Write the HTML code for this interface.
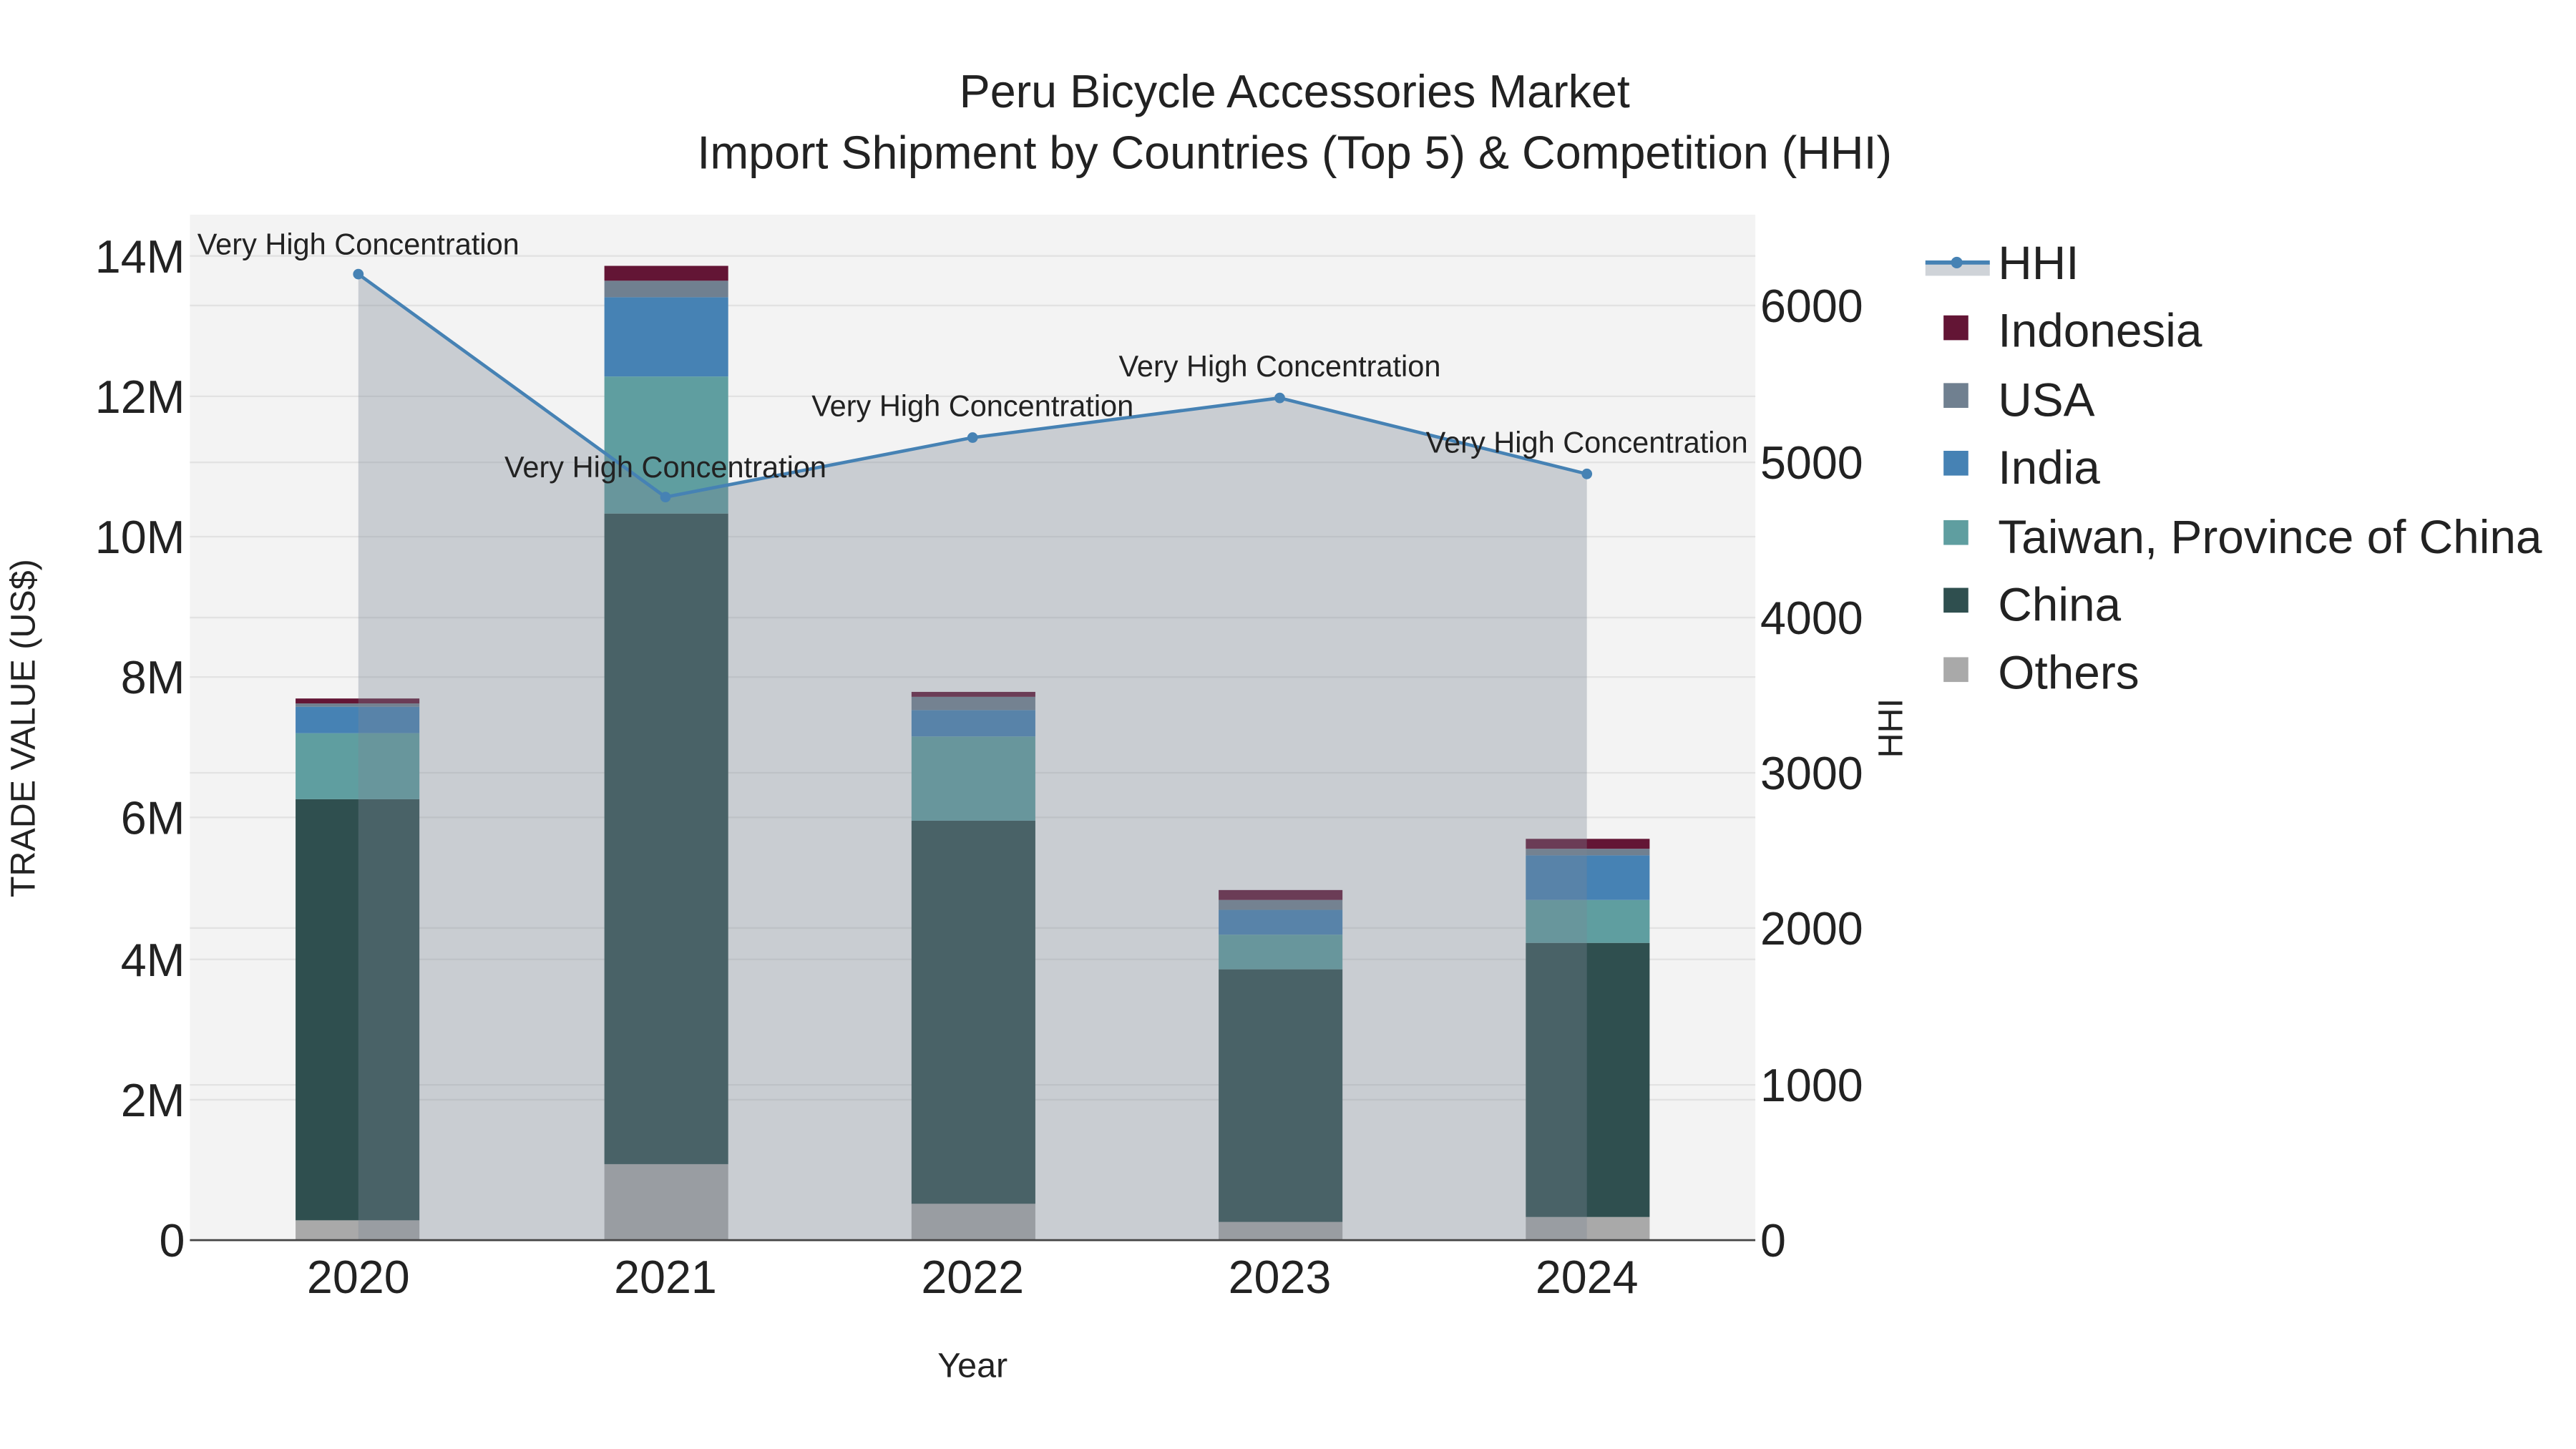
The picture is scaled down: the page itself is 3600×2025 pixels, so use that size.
<!DOCTYPE html>
<html><head><meta charset="utf-8"><style>html,body{margin:0;padding:0;background:#fff}svg{display:block}text{font-family:"Liberation Sans",sans-serif;fill:#222}</style></head>
<body>
<svg width="3600" height="2025" viewBox="0 0 1560 877.5" xmlns="http://www.w3.org/2000/svg">
<rect x="115" y="130" width="948" height="621" fill="#f3f3f3"/>
<g stroke="#e2e2e2" stroke-width="1">
<line x1="115" x2="1063" y1="155" y2="155"/><line x1="115" x2="1063" y1="240" y2="240"/><line x1="115" x2="1063" y1="325" y2="325"/><line x1="115" x2="1063" y1="410" y2="410"/><line x1="115" x2="1063" y1="495" y2="495"/><line x1="115" x2="1063" y1="581" y2="581"/><line x1="115" x2="1063" y1="666" y2="666"/>
<line x1="115" x2="1063" y1="185" y2="185"/><line x1="115" x2="1063" y1="280" y2="280"/><line x1="115" x2="1063" y1="374" y2="374"/><line x1="115" x2="1063" y1="468" y2="468"/><line x1="115" x2="1063" y1="562" y2="562"/><line x1="115" x2="1063" y1="657" y2="657"/>
</g>
<g>
<rect x="179" y="739" width="75" height="12" fill="#a9a9a9"/><rect x="179" y="484" width="75" height="255" fill="#2f4f4f"/><rect x="179" y="444" width="75" height="40" fill="#5f9ea0"/><rect x="179" y="428" width="75" height="16" fill="#4682b4"/><rect x="179" y="426" width="75" height="2" fill="#708090"/><rect x="179" y="423" width="75" height="3" fill="#631535"/>
<rect x="366" y="705" width="75" height="46" fill="#a9a9a9"/><rect x="366" y="311" width="75" height="394" fill="#2f4f4f"/><rect x="366" y="228" width="75" height="83" fill="#5f9ea0"/><rect x="366" y="180" width="75" height="48" fill="#4682b4"/><rect x="366" y="170" width="75" height="10" fill="#708090"/><rect x="366" y="161" width="75" height="9" fill="#631535"/>
<rect x="552" y="729" width="75" height="22" fill="#a9a9a9"/><rect x="552" y="497" width="75" height="232" fill="#2f4f4f"/><rect x="552" y="446" width="75" height="51" fill="#5f9ea0"/><rect x="552" y="430" width="75" height="16" fill="#4682b4"/><rect x="552" y="422" width="75" height="8" fill="#708090"/><rect x="552" y="419" width="75" height="3" fill="#631535"/>
<rect x="738" y="740" width="75" height="11" fill="#a9a9a9"/><rect x="738" y="587" width="75" height="153" fill="#2f4f4f"/><rect x="738" y="566" width="75" height="21" fill="#5f9ea0"/><rect x="738" y="551" width="75" height="15" fill="#4682b4"/><rect x="738" y="545" width="75" height="6" fill="#708090"/><rect x="738" y="539" width="75" height="6" fill="#631535"/>
<rect x="924" y="737" width="75" height="14" fill="#a9a9a9"/><rect x="924" y="571" width="75" height="166" fill="#2f4f4f"/><rect x="924" y="545" width="75" height="26" fill="#5f9ea0"/><rect x="924" y="518" width="75" height="27" fill="#4682b4"/><rect x="924" y="514" width="75" height="4" fill="#708090"/><rect x="924" y="508" width="75" height="6" fill="#631535"/>
</g>
<polygon points="217,751 217,166 403,301 589,265 775,241 961,287 961,751" fill="rgb(122,134,150)" fill-opacity="0.35"/>
<polyline points="217,166 403,301 589,265 775,241 961,287" fill="none" stroke="#4682b4" stroke-width="2"/>
<g fill="#4682b4"><circle cx="217" cy="166" r="3.2"/><circle cx="403" cy="301" r="3.2"/><circle cx="589" cy="265" r="3.2"/><circle cx="775" cy="241" r="3.2"/><circle cx="961" cy="287" r="3.2"/></g>
<line x1="115" x2="1063" y1="751" y2="751" stroke="#444" stroke-width="1.2"/>
<g font-size="18" text-anchor="middle"><text x="217" y="154">Very High Concentration</text><text x="403" y="289">Very High Concentration</text><text x="589" y="252">Very High Concentration</text><text x="775" y="228">Very High Concentration</text><text x="961" y="274">Very High Concentration</text></g>
<g font-size="28" text-anchor="end"><text x="112" y="165">14M</text><text x="112" y="250">12M</text><text x="112" y="335">10M</text><text x="112" y="420">8M</text><text x="112" y="505">6M</text><text x="112" y="591">4M</text><text x="112" y="676">2M</text><text x="112" y="761">0</text></g>
<g font-size="28"><text x="1066" y="195">6000</text><text x="1066" y="290">5000</text><text x="1066" y="384">4000</text><text x="1066" y="478">3000</text><text x="1066" y="572">2000</text><text x="1066" y="667">1000</text><text x="1066" y="761">0</text></g>
<g font-size="28" text-anchor="middle"><text x="217" y="783">2020</text><text x="403" y="783">2021</text><text x="589" y="783">2022</text><text x="775" y="783">2023</text><text x="961" y="783">2024</text></g>
<text x="589" y="834" font-size="21" text-anchor="middle">Year</text>
<text transform="translate(21,441) rotate(-90)" font-size="21" text-anchor="middle">TRADE VALUE (US$)</text>
<text transform="translate(1152,441) rotate(-90)" font-size="21" text-anchor="middle">HHI</text>
<text x="784" y="65" font-size="28" text-anchor="middle">Peru Bicycle Accessories Market</text>
<text x="784" y="102" font-size="28" text-anchor="middle">Import Shipment by Countries (Top 5) &amp; Competition (HHI)</text>
<rect x="1166" y="159" width="39" height="8" fill="#cfd3d8"/>
<line x1="1166" x2="1205" y1="159" y2="159" stroke="#4682b4" stroke-width="2.5"/><circle cx="1185" cy="159" r="3.5" fill="#4682b4"/>
<rect x="1177" y="191" width="15" height="15" fill="#631535"/><rect x="1177" y="232" width="15" height="15" fill="#708090"/><rect x="1177" y="273" width="15" height="15" fill="#4682b4"/><rect x="1177" y="315" width="15" height="15" fill="#5f9ea0"/><rect x="1177" y="356" width="15" height="15" fill="#2f4f4f"/><rect x="1177" y="398" width="15" height="15" fill="#a9a9a9"/>
<g font-size="28.5"><text x="1210" y="169">HHI</text><text x="1210" y="210">Indonesia</text><text x="1210" y="252">USA</text><text x="1210" y="293">India</text><text x="1210" y="335">Taiwan, Province of China</text><text x="1210" y="376">China</text><text x="1210" y="417">Others</text></g>
</svg>
</body></html>
